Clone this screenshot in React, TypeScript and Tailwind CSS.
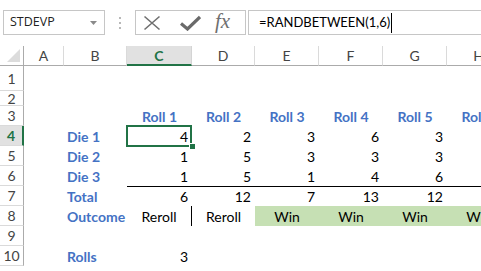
import React from "react";

const COLS = [
  { k: "A", w: 40 },
  { k: "B", w: 63 },
  { k: "C", w: 65 },
  { k: "D", w: 63 },
  { k: "E", w: 64 },
  { k: "F", w: 64 },
  { k: "G", w: 64 },
  { k: "H", w: 64 },
];

type Cell = { t?: string; kind?: "label" | "num" | "head" | "text" | "win" };

const rows: { n: number; h: number; cells: Record<string, Cell> }[] = [
  { n: 1, h: 25, cells: {} },
  { n: 2, h: 15, cells: {} },
  {
    n: 3,
    h: 20,
    cells: {
      C: { t: "Roll 1", kind: "head" },
      D: { t: "Roll 2", kind: "head" },
      E: { t: "Roll 3", kind: "head" },
      F: { t: "Roll 4", kind: "head" },
      G: { t: "Roll 5", kind: "head" },
      H: { t: "Roll 6", kind: "head" },
    },
  },
  {
    n: 4,
    h: 20,
    cells: {
      B: { t: "Die 1", kind: "label" },
      C: { t: "4", kind: "num" },
      D: { t: "2", kind: "num" },
      E: { t: "3", kind: "num" },
      F: { t: "6", kind: "num" },
      G: { t: "3", kind: "num" },
      H: { t: "4", kind: "num" },
    },
  },
  {
    n: 5,
    h: 20,
    cells: {
      B: { t: "Die 2", kind: "label" },
      C: { t: "1", kind: "num" },
      D: { t: "5", kind: "num" },
      E: { t: "3", kind: "num" },
      F: { t: "3", kind: "num" },
      G: { t: "3", kind: "num" },
      H: { t: "3", kind: "num" },
    },
  },
  {
    n: 6,
    h: 20,
    cells: {
      B: { t: "Die 3", kind: "label" },
      C: { t: "1", kind: "num" },
      D: { t: "5", kind: "num" },
      E: { t: "1", kind: "num" },
      F: { t: "4", kind: "num" },
      G: { t: "6", kind: "num" },
      H: { t: "2", kind: "num" },
    },
  },
  {
    n: 7,
    h: 20,
    cells: {
      B: { t: "Total", kind: "label" },
      C: { t: "6", kind: "num" },
      D: { t: "12", kind: "num" },
      E: { t: "7", kind: "num" },
      F: { t: "13", kind: "num" },
      G: { t: "12", kind: "num" },
      H: { t: "9", kind: "num" },
    },
  },
  {
    n: 8,
    h: 20,
    cells: {
      B: { t: "Outcome", kind: "label" },
      C: { t: "Reroll", kind: "text" },
      D: { t: "Reroll", kind: "text" },
      E: { t: "Win", kind: "win" },
      F: { t: "Win", kind: "win" },
      G: { t: "Win", kind: "win" },
      H: { t: "Win", kind: "win" },
    },
  },
  { n: 9, h: 20, cells: {} },
  {
    n: 10,
    h: 20,
    cells: {
      B: { t: "Rolls", kind: "label" },
      C: { t: "3", kind: "num" },
    },
  },
];

const font = { fontFamily: "Lato, 'Liberation Sans', sans-serif" };

export default function App() {
  return (
    <div className="w-[481px] h-[271px] overflow-hidden bg-white relative" style={font}>
      {/* Formula bar */}
      <div className="h-[46px] flex items-start pt-[10px]">
        <div className="ml-[3px] w-[102px] h-[25px] border border-[#c6c6c6] flex items-center pl-[6px] pr-[7px]">
          <span
            className="text-[12.5px] text-[#222] flex-1"
            style={{ fontFamily: "'Open Sans', 'Noto Sans', sans-serif" }}
          >
            STDEVP
          </span>
          <svg width="7" height="4" viewBox="0 0 7 4">
            <path d="M0 0 L7 0 L3.5 4 Z" fill="#8a8a8a" />
          </svg>
        </div>
        <div className="w-[30px] h-[25px] flex flex-col items-center justify-center gap-[3px]">
          <div className="w-[2px] h-[2px] bg-[#b8b8b8]" />
          <div className="w-[2px] h-[2px] bg-[#b8b8b8]" />
          <div className="w-[2px] h-[2px] bg-[#b8b8b8]" />
        </div>
        <div className="w-[110px] h-[25px] border border-[#c6c6c6] border-r-0 flex items-center">
          <svg className="ml-[7px]" width="18" height="16" viewBox="0 0 18 16">
            <path d="M1.5 1.5 L16.5 14.5 M16.5 1.5 L1.5 14.5" stroke="#707070" strokeWidth="1.6" />
          </svg>
          <svg className="ml-[19px]" width="21" height="16" viewBox="0 0 21 16">
            <path d="M1 8.5 L7.5 14 L20 2" stroke="#6a6a6a" strokeWidth="3.2" fill="none" />
          </svg>
          <span
            className="ml-[14px] text-[21px] italic text-[#6f6f6f] leading-none -mt-[2px]"
            style={{ fontFamily: "'Liberation Serif', serif" }}
          >
            fx
          </span>
        </div>
        <div className="w-[1px] h-[25px] bg-[#c6c6c6]" />
        <div className="ml-[2px] flex-1 h-[25px] border border-[#c6c6c6] border-r-0 flex items-center pl-[10px]">
          <span className="text-[13px] text-black leading-none">=RANDBETWEEN(1,6)</span>
          <div className="w-[1px] h-[20px] bg-black ml-[1px]" />
        </div>
      </div>

      {/* Column headers */}
      <div className="flex h-[20px]">
        <div className="w-[24px] h-[20px] border-r border-b border-[#ababab] relative shrink-0">
          <svg className="absolute right-[3px] bottom-[3px]" width="13" height="13" viewBox="0 0 13 13">
            <path d="M13 0 L13 13 L0 13 Z" fill="#dcdcdc" />
          </svg>
        </div>
        {COLS.map((c) => {
          const sel = c.k === "C";
          return (
            <div
              key={c.k}
              className={
                "h-[20px] shrink-0 flex items-center justify-center text-[14px] border-r " +
                (sel
                  ? "bg-[#e1e1e1] border-r-[#d4d4d4] border-b-2 border-b-[#217346] text-[#217346] font-bold"
                  : "border-r-[#dadada] border-b border-b-[#ababab] text-[#444]")
              }
              style={{ width: c.w }}
            >
              {c.k}
            </div>
          );
        })}
        <div className="flex-1 h-[20px] border-b border-[#ababab]" />
      </div>

      {/* Rows */}
      {rows.map((r) => {
        const selRow = r.n === 4;
        return (
          <div key={r.n} className="flex" style={{ height: r.h }}>
            <div
              className={
                "w-[24px] shrink-0 flex items-center justify-center text-[14px] border-b border-b-[#dadada] " +
                (selRow
                  ? "bg-[#e1e1e1] border-r-2 border-r-[#217346] text-[#217346] font-bold"
                  : "border-r border-r-[#ababab] text-[#444]")
              }
              style={{ height: r.h }}
            >
              {r.n}
            </div>
            {COLS.map((c) => {
              const cell = r.cells[c.k];
              const topLine = r.n === 7 && ["C", "D", "E", "F", "G", "H"].includes(c.k);
              const rightLine = r.n === 8 && c.k === "C";
              const win = cell?.kind === "win";
              let cls =
                "shrink-0 flex items-center text-[14px] relative " +
                (topLine ? "border-t border-black " : "") +
                (rightLine ? "border-r border-black " : "") +
                (win ? "bg-[#c6e0b4] " : "");
              if (cell?.kind === "label") cls += "justify-start pl-[3px] text-[#4472c4] font-bold";
              else if (cell?.kind === "head") cls += "justify-center text-[#4472c4] font-bold";
              else if (cell?.kind === "num") cls += "justify-end pr-[4px] text-black";
              else if (cell?.kind === "text" || win) cls += "justify-center text-black";
              return (
                <div key={c.k} className={cls} style={{ width: c.w, height: r.h }}>
                  {cell?.t}
                  {selRow && c.k === "C" && (
                    <>
                      <div className="absolute z-10 left-[-1px] top-[-1px] w-[66px] h-[22px] border-2 border-[#217346]" />
                      <div className="absolute z-20 right-[-4px] bottom-[-4px] w-[7px] h-[7px] bg-[#217346] border border-white" />
                    </>
                  )}
                </div>
              );
            })}
            <div className="flex-1" />
          </div>
        );
      })}
    </div>
  );
}
